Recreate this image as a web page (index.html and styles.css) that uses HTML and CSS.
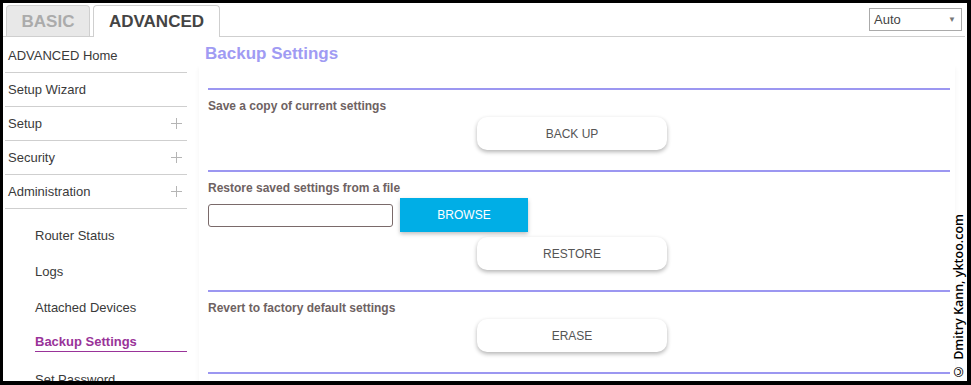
FILE: index.html
```html
<!DOCTYPE html>
<html lang="en">
<head>
  <meta charset="UTF-8" />
  <meta name="viewport" content="width=device-width, initial-scale=1.0"/>
  <title>Backup Settings</title>
  <link rel="stylesheet" href="styles.css">
</head>
<body>
<div class="frame">
  <div class="topbar">
    <div class="tab tab-basic">BASIC</div>
    <div class="tab tab-active">ADVANCED</div>
    <div class="lang">
      <span>Auto</span>
      <span class="arrow">&#9660;</span>
    </div>
  </div>

  <div class="main">
    <div class="sidebar">
      <div class="nav-item">ADVANCED Home</div>
      <div class="nav-item">Setup Wizard</div>
      <div class="nav-item">Setup <svg class="plus" width="11" height="11" viewBox="0 0 11 11"><path d="M5.5 0V11M0 5.5H11" stroke="#b5b5b5" stroke-width="1"/></svg></div>
      <div class="nav-item">Security <svg class="plus" width="11" height="11" viewBox="0 0 11 11"><path d="M5.5 0V11M0 5.5H11" stroke="#b5b5b5" stroke-width="1"/></svg></div>
      <div class="nav-item">Administration <svg class="plus" width="11" height="11" viewBox="0 0 11 11"><path d="M5.5 0V11M0 5.5H11" stroke="#b5b5b5" stroke-width="1"/></svg></div>
      <div class="submenu">
        <div class="sub-item">Router Status</div>
        <div class="sub-item">Logs</div>
        <div class="sub-item">Attached Devices</div>
        <div class="sub-item active">Backup Settings</div>
        <div class="sub-item">Set Password</div>
      </div>
    </div>

    <div class="content">
      <h1 class="title">Backup Settings</h1>
      <div class="card">
        <div class="section">
          <div class="label">Save a copy of current settings</div>
          <button class="btn">BACK UP</button>
        </div>
        <div class="section">
          <div class="label">Restore saved settings from a file</div>
          <div class="file-row">
            <input type="text" class="file-input">
            <button class="browse">BROWSE</button>
          </div>
          <button class="btn btn-restore">RESTORE</button>
        </div>
        <div class="section">
          <div class="label">Revert to factory default settings</div>
          <button class="btn">ERASE</button>
        </div>
        <div class="section"></div>
      </div>
    </div>
  </div>

  <div class="credit">&copy; Dmitry Kann, yktoo.com</div>
</div>
</body>
</html>
```

FILE: styles.css
```css
body {
  margin: 0;
  background: #000;
  font-family: "Liberation Sans", Arial, sans-serif;
}
.frame {
  position: relative;
  box-sizing: border-box;
  width: 971px;
  height: 385px;
  border-style: solid;
  border-color: #000;
  border-width: 3px 4px 4px 3px;
  background: #fff;
  overflow: hidden;
}
.topbar {
  display: flex;
  align-items: flex-end;
  height: 33px;
  padding-left: 3px;
  margin-right: 2px;
  border-bottom: 1px solid #cfcfcf;
}
.tab {
  box-sizing: border-box;
  height: 32px;
  margin-bottom: -1px;
  border: 1px solid #cfcfcf;
  border-bottom: none;
  border-radius: 4px 4px 0 0;
  font-size: 17px;
  font-weight: bold;
  text-align: center;
  line-height: 31px;
}
.tab-basic {
  width: 84px;
  height: 31px;
  margin-bottom: 0;
  background: #e8e8e8;
  color: #ababab;
}
.tab-active {
  width: 127px;
  margin-left: 3px;
  background: #fff;
  color: #444;
}
.lang {
  align-self: flex-start;
  display: flex;
  justify-content: space-between;
  align-items: center;
  box-sizing: border-box;
  width: 93px;
  height: 23px;
  margin: 5px 3px 0 auto;
  padding: 0 5px 0 4px;
  border: 1px solid #aaa;
  font-size: 13px;
  color: #444;
}
.lang .arrow {
  font-size: 8px;
  color: #777;
}
.main {
  display: flex;
}
.sidebar {
  width: 182px;
  margin-left: 2px;
  padding-top: 2px;
}
.nav-item {
  display: flex;
  justify-content: space-between;
  align-items: center;
  height: 33px;
  padding: 0 5px 0 3px;
  border-bottom: 1px solid #cfcfcf;
  font-size: 13px;
  color: #3a3a3a;
}
.submenu {
  padding: 17px 0 0 30px;
}
.sub-item {
  line-height: 20px;
  margin-bottom: 16px;
  font-size: 13px;
  color: #3a3a3a;
}
.sub-item.active {
  line-height: 17px;
  padding-bottom: 1px;
  margin-top: -1px;
  margin-bottom: 18px;
  border-bottom: 1px solid #993399;
  color: #993399;
  font-weight: bold;
}
.content {
  flex: 1;
  margin: 0 12px 0 12px;
}
.title {
  margin: 7px 0 0 6px;
  font-size: 17px;
  line-height: 20px;
  color: #a09bf3;
}
.card {
  height: 330px;
  padding: 24px 5px 0 9px;
  background: #fff;
  box-shadow: 0 4px 5px rgba(0, 0, 0, 0.05);
}
.section {
  padding: 8px 0 20px;
  border-top: 2px solid #9c97f1;
}
.label {
  font-size: 12px;
  line-height: 16px;
  font-weight: bold;
  color: #6e6262;
}
.btn {
  display: block;
  width: 190px;
  height: 33px;
  margin: 3px 0 0 269px;
  border: none;
  border-radius: 10px;
  background: #fff;
  box-shadow: 0 2px 4px rgba(0, 0, 0, 0.3);
  font-family: "Liberation Sans", Arial, sans-serif;
  font-size: 12px;
  color: #555;
}
.btn-restore {
  margin-top: 5px;
}
.file-row {
  display: flex;
  align-items: center;
  margin-top: 2px;
}
.file-input {
  box-sizing: border-box;
  width: 185px;
  height: 23px;
  margin: 0;
  border: 1px solid #7a6a6a;
  border-radius: 3px;
}
.browse {
  width: 128px;
  height: 34px;
  margin-left: 7px;
  border: none;
  background: #00aee6;
  box-shadow: 0 2px 4px rgba(0, 0, 0, 0.25);
  font-family: "Liberation Sans", Arial, sans-serif;
  font-size: 12px;
  color: #fff;
}
.credit {
  position: absolute;
  right: 1px;
  bottom: 1px;
  writing-mode: vertical-rl;
  transform: rotate(180deg);
  font-family: "Open Sans", sans-serif;
  font-weight: 600;
  font-size: 12.5px;
  line-height: 14px;
  color: #000;
}
```
